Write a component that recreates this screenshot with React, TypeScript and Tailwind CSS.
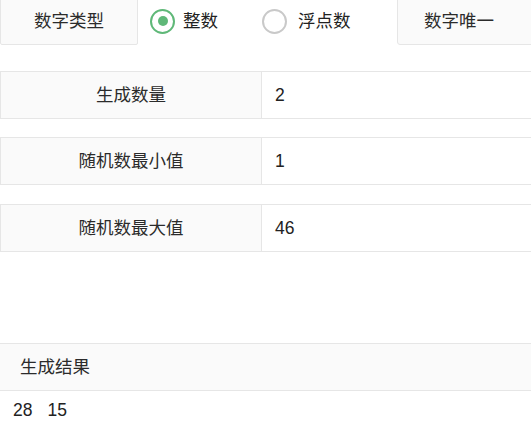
import React from "react";

const font = { fontFamily: '"Liberation Sans", "Noto Sans CJK SC", sans-serif' };

function Row({ label, value, className }: { label: string; value: string; className?: string }) {
  return (
    <div className={`flex h-[48px] w-[600px] border border-[#e6e6e6] ${className ?? ""}`}>
      <div className="flex w-[261px] shrink-0 items-center justify-center border-r border-[#e6e6e6] bg-[#fafafa] text-[17.5px] text-[#2b2b2b]">
        {label}
      </div>
      <div className="flex items-center pl-[13px] text-[17.5px] text-[#222]">{value}</div>
    </div>
  );
}

export default function App() {
  return (
    <div className="relative h-[429px] w-[531px] overflow-hidden bg-white" style={font}>
      <div className="-mt-[3px] flex h-[48px] w-[700px]">
        <div className="flex w-[138px] shrink-0 items-center justify-center rounded-b-[2px] border border-[#e6e6e6] bg-[#fafafa] text-[17.5px] text-[#2b2b2b]">
          数字类型
        </div>
        <div className="flex w-[259px] shrink-0 items-center pl-[12px]">
          <span className="flex h-[25px] w-[25px] items-center justify-center rounded-full border-[2.5px] border-[#5fb878]">
            <span className="h-[10px] w-[10px] rounded-full bg-[#5fb878]" />
          </span>
          <span className="ml-[8px] text-[17.5px] text-[#222]">整数</span>
          <span className="ml-[44px] h-[25px] w-[25px] rounded-full border-[2px] border-[#c9c9c9]" />
          <span className="ml-[11px] text-[17.5px] text-[#222]">浮点数</span>
        </div>
        <div className="flex w-[200px] shrink-0 items-center rounded-bl-[3px] border border-[#e6e6e6] bg-[#fafafa] pl-[26px] text-[17.5px] text-[#2b2b2b]">
          数字唯一
        </div>
      </div>

      <Row label="生成数量" value="2" className="mt-[26px]" />
      <Row label="随机数最小值" value="1" className="mt-[18px]" />
      <Row label="随机数最大值" value="46" className="mt-[19px]" />

      <div className="mt-[91px] w-[600px] border-t border-[#e6e6e6]">
        <div className="flex h-[47px] items-center border-b border-[#e6e6e6] bg-[#fafafa] pl-[20px] text-[17.5px] text-[#2b2b2b]">
          生成结果
        </div>
        <div className="flex items-center pl-[13px] pt-[6px] text-[17.5px] text-[#222]">
          <span>28</span>
          <span className="ml-[15px]">15</span>
        </div>
      </div>
    </div>
  );
}
